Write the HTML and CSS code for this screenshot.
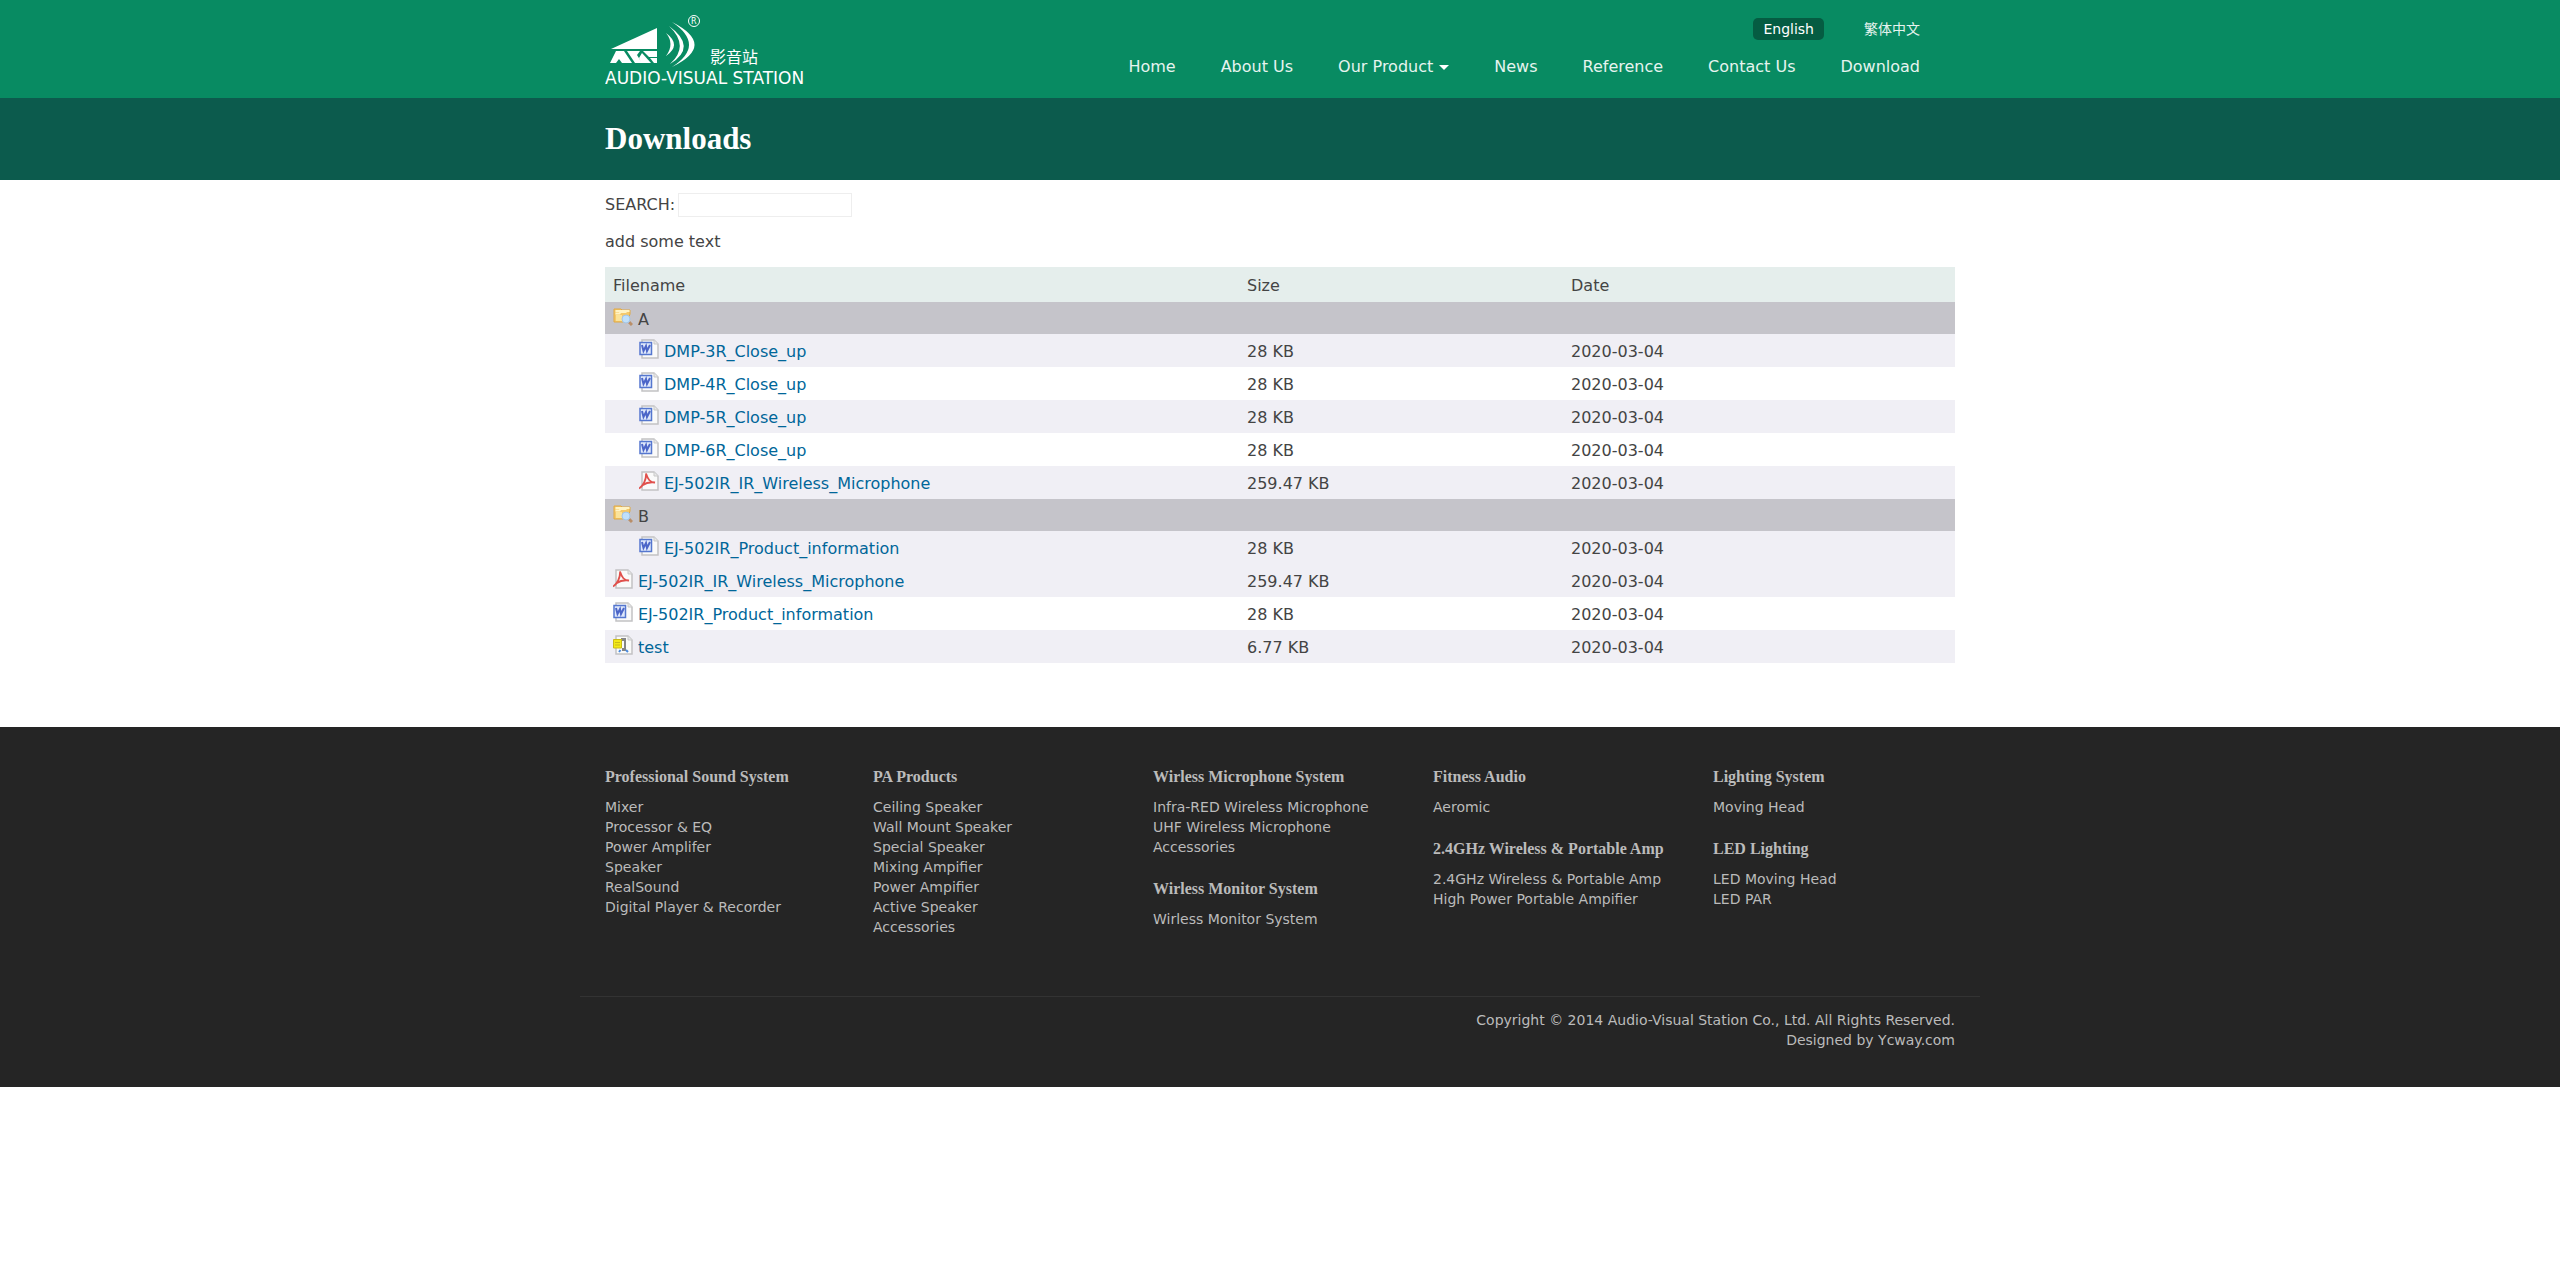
FILE: index.html
```html
<!DOCTYPE html>
<html lang="en">
<head>
<meta charset="utf-8">
<title>Downloads - Audio-Visual Station</title>
<link rel="stylesheet" href="styles.css">
</head>
<body>
<svg class="sprite" aria-hidden="true">
  <symbol id="folder" viewBox="0 0 20 20">
    <path d="M1 2h7l1 1h8v4l-3 8H1z" fill="#f5c96a" stroke="#e0a944"/>
    <path d="M2.500 4h14M2.500 6.500h4l1-1.500h6" fill="none" stroke="#fff3c4" stroke-width="2"/>
    <path d="M3 8h6v6H3z" fill="#fbe39a"/>
    <path d="M16 15l3 3" stroke="#b98e68" stroke-width="3"/>
    <circle cx="13" cy="12" r="4" fill="#c0e0fa" stroke="#a3c4e6"/>
  </symbol>
  <symbol id="page" viewBox="0 0 20 20">
    <path d="M3 1h12l4 4v14H3z" fill="#fafafa" stroke="#c2c2c4" stroke-width="1.500"/>
    <path d="M15 1v4h4" fill="#e8e8e8" stroke="#c8c8c8"/>
  </symbol>
  <symbol id="word" viewBox="0 0 20 20">
    <use href="#page"/>
    <path d="M1 3.500h11.500v12H1z" fill="#dfe8fb" stroke="#5577cf" stroke-width="1.500"/>
    <path d="M3 6l1.500 6L7 7l1 5 3-6" fill="none" stroke="#4c66c8" stroke-width="2"/>
  </symbol>
  <symbol id="pdf" viewBox="0 0 20 20">
    <use href="#page"/>
    <path d="M0 17.500C4 15 7.500 9 7 2.500c2 6 4 9 9 9-6-1-10 1-13 3" fill="none" stroke="#e0504c" stroke-width="1.800"/>
  </symbol>
  <symbol id="zip" viewBox="0 0 20 20">
    <use href="#page"/>
    <path d="M8 3h5v13h-4v-3h2V6H8z" fill="#858585"/>
    <path d="M0.500 4.500h8V13h-8z" fill="#f3e916" stroke="#c9bb19"/>
    <path d="M2 7.500h5M2 10h5" stroke="#c9bb19"/>
    <path d="M6 17l1.500-2M15 17l-2-2" stroke="#4a8be0" stroke-width="2"/>
  </symbol>
</svg>

<header class="header">
  <div class="container header-inner">
    <a class="brand" href="#" aria-label="Audio-Visual Station">
      <svg class="logo" viewBox="0 0 220 80" fill="#fff">
        <path d="M6 39L52 18v21z"/>
        <path d="M11 41h8l8 12H17l-3-4-3 4H5z"/>
        <path d="M22 41h13l-3 4 5 8h-7z"/>
        <path d="M37 43l9 10H36l-2-5z"/>
        <path d="M38 41h14v6h-8z"/>
        <path d="M45 48h7v5h-3z"/>
        <path d="M61 23q16 12 0 23 9-12 0-23z"/>
        <path d="M64 16q29 21 1 38 20-18-1-38z"/>
        <path d="M67 12q45 23 0 45 34-22 0-45z"/>
        <circle cx="89" cy="11" r="5.500" fill="none" stroke="#fff"/>
        <text class="logo-r" x="86" y="14">R</text>
        <text class="logo-cjk" x="105" y="53">影音站</text>
        <text class="logo-name" x="0" y="74">AUDIO-VISUAL STATION</text>
      </svg>
    </a>
    <div class="menus">
      <ul class="languages">
        <li><a class="current" href="#">English</a></li>
        <li><a href="#" lang="zh-Hant">繁体中文</a></li>
      </ul>
      <nav>
        <ul class="menu">
          <li><a href="#">Home</a></li>
          <li><a href="#">About Us</a></li>
          <li><a class="dropdown" href="#">Our Product</a></li>
          <li><a href="#">News</a></li>
          <li><a href="#">Reference</a></li>
          <li><a href="#">Contact Us</a></li>
          <li><a href="#">Download</a></li>
        </ul>
      </nav>
    </div>
  </div>
</header>

<div class="title-bar">
  <div class="container"><h1>Downloads</h1></div>
</div>

<main class="container content">
  <form class="search">
    <label for="search">SEARCH:</label>
    <input id="search" type="text">
  </form>
  <p>add some text</p>
  <table class="files">
    <thead>
      <tr><th class="name">Filename</th><th class="size">Size</th><th>Date</th></tr>
    </thead>
    <tbody>
      <tr class="folder"><td colspan="3"><svg class="icon"><use href="#folder"/></svg>A</td></tr>
      <tr class="odd nested"><td><svg class="icon"><use href="#word"/></svg><a href="#">DMP-3R_Close_up</a></td><td>28 KB</td><td>2020-03-04</td></tr>
      <tr class="nested"><td><svg class="icon"><use href="#word"/></svg><a href="#">DMP-4R_Close_up</a></td><td>28 KB</td><td>2020-03-04</td></tr>
      <tr class="odd nested"><td><svg class="icon"><use href="#word"/></svg><a href="#">DMP-5R_Close_up</a></td><td>28 KB</td><td>2020-03-04</td></tr>
      <tr class="nested"><td><svg class="icon"><use href="#word"/></svg><a href="#">DMP-6R_Close_up</a></td><td>28 KB</td><td>2020-03-04</td></tr>
      <tr class="odd nested"><td><svg class="icon"><use href="#pdf"/></svg><a href="#">EJ-502IR_IR_Wireless_Microphone</a></td><td>259.47 KB</td><td>2020-03-04</td></tr>
      <tr class="folder"><td colspan="3"><svg class="icon"><use href="#folder"/></svg>B</td></tr>
      <tr class="odd nested"><td><svg class="icon"><use href="#word"/></svg><a href="#">EJ-502IR_Product_information</a></td><td>28 KB</td><td>2020-03-04</td></tr>
      <tr class="odd"><td><svg class="icon"><use href="#pdf"/></svg><a href="#">EJ-502IR_IR_Wireless_Microphone</a></td><td>259.47 KB</td><td>2020-03-04</td></tr>
      <tr><td><svg class="icon"><use href="#word"/></svg><a href="#">EJ-502IR_Product_information</a></td><td>28 KB</td><td>2020-03-04</td></tr>
      <tr class="odd"><td><svg class="icon"><use href="#zip"/></svg><a href="#">test</a></td><td>6.77 KB</td><td>2020-03-04</td></tr>
    </tbody>
  </table>
</main>

<footer class="footer">
  <div class="container columns">
    <section>
      <h2>Professional Sound System</h2>
      <ul>
        <li><a href="#">Mixer</a></li>
        <li><a href="#">Processor &amp; EQ</a></li>
        <li><a href="#">Power Amplifer</a></li>
        <li><a href="#">Speaker</a></li>
        <li><a href="#">RealSound</a></li>
        <li><a href="#">Digital Player &amp; Recorder</a></li>
      </ul>
    </section>
    <section>
      <h2>PA Products</h2>
      <ul>
        <li><a href="#">Ceiling Speaker</a></li>
        <li><a href="#">Wall Mount Speaker</a></li>
        <li><a href="#">Special Speaker</a></li>
        <li><a href="#">Mixing Ampifier</a></li>
        <li><a href="#">Power Ampifier</a></li>
        <li><a href="#">Active Speaker</a></li>
        <li><a href="#">Accessories</a></li>
      </ul>
    </section>
    <section>
      <h2>Wirless Microphone System</h2>
      <ul>
        <li><a href="#">Infra-RED Wireless Microphone</a></li>
        <li><a href="#">UHF Wireless Microphone</a></li>
        <li><a href="#">Accessories</a></li>
      </ul>
      <h2>Wirless Monitor System</h2>
      <ul>
        <li><a href="#">Wirless Monitor System</a></li>
      </ul>
    </section>
    <section>
      <h2>Fitness Audio</h2>
      <ul>
        <li><a href="#">Aeromic</a></li>
      </ul>
      <h2>2.4GHz Wireless &amp; Portable Amp</h2>
      <ul>
        <li><a href="#">2.4GHz Wireless &amp; Portable Amp</a></li>
        <li><a href="#">High Power Portable Ampifier</a></li>
      </ul>
    </section>
    <section>
      <h2>Lighting System</h2>
      <ul>
        <li><a href="#">Moving Head</a></li>
      </ul>
      <h2>LED Lighting</h2>
      <ul>
        <li><a href="#">LED Moving Head</a></li>
        <li><a href="#">LED PAR</a></li>
      </ul>
    </section>
  </div>
  <div class="container copyright">
    <p>Copyright © 2014 Audio-Visual Station Co., Ltd. All Rights Reserved.</p>
    <p>Designed by <a href="#">Ycway.com</a></p>
  </div>
</footer>
</body>
</html>
```
FILE: styles.css
```css
* { box-sizing: border-box; }

body {
  margin: 0;
  background: #fff;
  color: #444;
  font: 16px/20px "DejaVu Sans", "Noto Sans CJK TC", sans-serif;
}

a { color: inherit; text-decoration: none; }
ul { margin: 0; padding: 0; list-style: none; }
p { margin: 0; }
h1, h2 { margin: 0; font-family: "Liberation Serif", serif; font-weight: bold; }

.sprite { display: none; }

.container {
  width: 100%;
  max-width: 1400px;
  margin: 0 auto;
  padding: 0 25px;
}

/* Header */
.header { background: #088b62; color: #e6f4ef; }
.header-inner {
  display: flex;
  justify-content: space-between;
  align-items: flex-start;
  padding-bottom: 8px;
}
.brand { display: block; padding-top: 10px; }
.logo { display: block; width: 220px; height: 80px; }
.logo-r { font-size: 8px; }
.logo-cjk { font: 16px "Noto Sans CJK TC", sans-serif; }
.logo-name { font-size: 17px; }

.menus { padding: 18px 35px 0 0; }
.languages {
  display: flex;
  justify-content: flex-end;
  gap: 40px;
  font-size: 14px;
  line-height: 22px;
}
.languages .current {
  display: block;
  padding: 0 10px;
  border-radius: 5px;
  background: #055c42;
  color: #fff;
}
.menu { display: flex; gap: 45px; margin-top: 17px; }
.dropdown::after {
  content: "";
  display: inline-block;
  margin-left: 6px;
  border: 5px solid transparent;
  border-top-color: #fff;
  border-bottom: 0;
  vertical-align: middle;
}

.title-bar { background: #0c5b4d; color: #fff; }
.title-bar h1 { padding: 23px 0; font-size: 31px; line-height: 36px; }

/* Download list */
.content { padding-top: 13px; padding-bottom: 64px; }
.search { display: flex; align-items: center; gap: 3px; margin-bottom: 15px; }
.search input {
  width: 174px;
  height: 24px;
  border: 1px solid #eee;
  background: #fff;
}
.files {
  width: 100%;
  margin-top: 15px;
  border-collapse: collapse;
  table-layout: fixed;
}
.files th {
  height: 35px;
  padding: 2px 8px 0;
  background: #e5eeec;
  font-weight: normal;
  text-align: left;
}
.files .name { width: 634px; }
.files .size { width: 324px; }
.files td { height: 33px; padding: 2px 8px 0; }
.files td:first-child { padding-top: 0; }
.files .folder td { height: 32px; background: #c5c4ca; }
.files .odd td { background: #f0eff5; }
.files .nested td:first-child { padding-left: 34px; }
.files a { color: #069; }
.icon { width: 20px; height: 20px; margin-right: 5px; vertical-align: -2px; }

/* Footer */
.footer { background: #252525; color: #bbb; font-size: 14px; }
.columns {
  display: grid;
  grid-template-columns: 268fr 280fr 280fr 280fr 242fr;
  padding-top: 39px;
  padding-bottom: 59px;
}
.columns h2 { margin-bottom: 9px; font-size: 16px; line-height: 22px; }
.columns ul + h2 { margin-top: 21px; }
.copyright {
  padding-top: 13px;
  padding-bottom: 37px;
  border-top: 1px solid #333;
  text-align: right;
}
```
